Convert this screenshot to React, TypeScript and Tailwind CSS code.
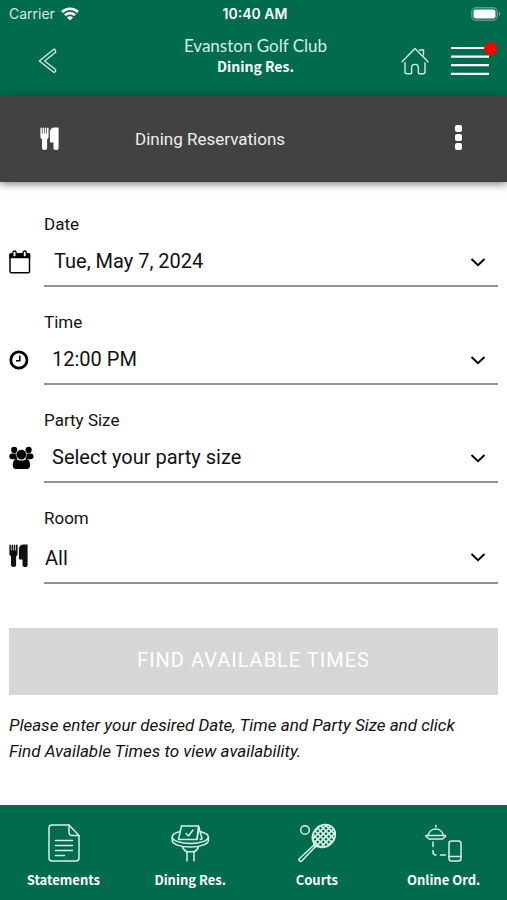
import { useState, type ReactNode } from "react";

const barFont = "font-['Noto_Sans_CJK_SC','Open_Sans',sans-serif]";

function WifiIcon() {
  return (
    <svg width="18" height="14" viewBox="0 0 18 14" fill="none" stroke="white" strokeWidth="2.6" aria-hidden="true">
      <path d="M1 5a11.3 11.3 0 0 1 16 0" />
      <path d="M3.9 8.2a7.2 7.2 0 0 1 10.2 0" />
      <path d="M9 13.6 6 10.6a4.3 4.3 0 0 1 6 0z" fill="white" stroke="none" />
    </svg>
  );
}

function BatteryIcon() {
  return (
    <svg width="30" height="14" viewBox="0 0 30 14" aria-hidden="true">
      <rect x="0.8" y="0.8" width="25.4" height="12.4" rx="4" fill="none" stroke="white" strokeOpacity="0.35" strokeWidth="1.4" />
      <rect x="2.5" y="2.5" width="22" height="9" rx="2" fill="white" />
      <path d="M28 5v4c1.6-.6 1.6-3.4 0-4z" fill="white" fillOpacity="0.5" />
    </svg>
  );
}

function BackIcon() {
  return (
    <svg width="20" height="28" viewBox="0 0 20 28" fill="none" stroke="#d5ebe2" strokeWidth="1.3" strokeLinejoin="round" aria-hidden="true">
      <path d="M16.2 2 1.3 14l14.9 11.6 1.4-1.4v-1.6L6.6 14 17.6 5.2V3.5z" />
    </svg>
  );
}

function HomeIcon() {
  return (
    <svg width="28" height="28" viewBox="0 0 28 28" fill="none" stroke="#d5ebe2" strokeWidth="1.4" strokeLinecap="round" strokeLinejoin="round" aria-hidden="true">
      <path d="M1 14.8 14 1.5l13 13.3" />
      <path d="M18.5 3h4v5" />
      <path d="M4 15.6v9.2a2 2 0 0 0 2 2h3.6a1 1 0 0 0 1-1v-5a3.4 3.4 0 0 1 6.8 0v5a1 1 0 0 0 1 1H22a2 2 0 0 0 2-2v-9.2" />
    </svg>
  );
}

function MenuIcon() {
  return (
    <svg width="38" height="30" viewBox="0 0 38 30" stroke="white" strokeWidth="2.2" aria-hidden="true">
      <path d="M0 2h38M0 10.6h38M0 19.2h38M0 27.8h38" />
    </svg>
  );
}

function CutleryIcon() {
  return (
    <svg width="20" height="24" viewBox="0 0 20 24" fill="currentColor" aria-hidden="true">
      <path d="M.4 1.5c0-1.2 1.5-1.2 1.5 0v5.1h.7V1.5c0-1.2 1.5-1.2 1.5 0v5.1h.7V1.5c0-1.2 1.5-1.2 1.5 0v5.1H7V1.5c0-1.2 1.6-1.2 1.6 0v8.1c0 1.4-.6 2.2-1.500 2.700V21c0 1.300-.8 2-2.500 2s-2.600-.7-2.600-2v-8.700C1 11.800.4 11 .4 9.600z" />
      <path d="M18.600.9v20.300c0 1.100-.8 1.800-2.200 1.800h-.7c-1.400 0-2.200-.8-2.200-2v-5.600h-2.900c-.5 0-.7-.3-.7-.8V5c0-2.400 1.900-4.400 4.500-4.400h3.700c.3 0 .5.100.5.300z" />
    </svg>
  );
}

function CalendarIcon() {
  return (
    <svg width="22" height="24" viewBox="0 0 22 24" aria-hidden="true">
      <rect x="1" y="4" width="19.5" height="18.8" rx="1.6" fill="white" stroke="black" strokeWidth="1.5" />
      <path d="M.3 8.300V4.500c0-.9.600-1.300 1.400-1.300h18.100c.9 0 1.400.5 1.400 1.300v3.800z" fill="black" />
      <rect x="3.9" y="1" width="3.2" height="6" rx="1.6" fill="white" stroke="black" strokeWidth="1.3" />
      <rect x="14.1" y="1" width="3.2" height="6" rx="1.6" fill="white" stroke="black" strokeWidth="1.3" />
    </svg>
  );
}

function ClockIcon() {
  return (
    <svg width="20" height="20" viewBox="0 0 20 20" fill="none" stroke="black" aria-hidden="true">
      <circle cx="9.9" cy="10" r="8.1" strokeWidth="2.8" />
      <path d="M10.800 5.500v5.300H7" strokeWidth="1.500" />
    </svg>
  );
}

function PartyIcon() {
  return (
    <svg width="26" height="24" viewBox="0 0 26 24" aria-hidden="true">
      <circle cx="5.200" cy="3.900" r="3.100" />
      <circle cx="19.600" cy="3.900" r="3.100" />
      <path d="M.3 10.500C.3 8.500 1.200 7.600 3 7.600h5v5.600H3.200c-1.900 0-2.900-.9-2.900-2.700zM24.500 10.500c0-2-.9-2.900-2.700-2.900h-5v5.600h4.800c1.900 0 2.900-.9 2.900-2.700z" />
      <circle cx="12.400" cy="8.600" r="5.200" stroke="white" strokeWidth=".6" />
      <path d="M7.400 13c3 2.100 7 2.100 10 0 2.600.3 3.700 3.200 3.700 6.300 0 2.300-1.100 3.700-3.300 3.700H7c-2.200 0-3.300-1.400-3.300-3.700 0-3.100 1.100-6 3.700-6.300z" />
    </svg>
  );
}

function ChevronIcon() {
  return (
    <svg width="16" height="10" viewBox="0 0 16 10" fill="none" stroke="black" strokeWidth="1.9" aria-hidden="true">
      <path d="M1.500 2 8 8.300 14.500 2" />
    </svg>
  );
}

function TabIcon({ children }: { children: ReactNode }) {
  return (
    <svg width="40" height="40" viewBox="0 0 40 40" fill="none" stroke="#d5f0e5" strokeWidth="1.5" strokeLinecap="round" strokeLinejoin="round" aria-hidden="true">
      {children}
    </svg>
  );
}

function StatementsIcon() {
  return (
    <TabIcon>
      <path d="M26 2H9a3 3 0 0 0-3 3v30a3 3 0 0 0 3 3h24a3 3 0 0 0 3-3V12.500z" />
      <path d="M26 2v7.500a3 3 0 0 0 3 3h7" />
      <path d="M12.500 17.500h17M12.500 22.500h17M12.500 27.500h17M12.500 32.500h9" />
    </TabIcon>
  );
}

function DiningIcon() {
  return (
    <TabIcon>
      <path d="M11.500 3h17l3.500 12.500a1 1 0 0 1-1.800.5" />
      <path d="M11.500 3 8.500 16.500h18.500L28.500 3" />
      <path d="M29 4.500 27 16" />
      <path d="m16 10.500 2.500 2.500 4.500-6" />
      <path d="M10 8.500c-5 1.200-7.800 3.200-7.800 5.600 0 3.600 8.200 6.400 18.100 6.400s18.100-2.800 18.100-6.400c0-2.200-3-4.200-7.500-5.400" />
      <path d="M2.200 14.100v3.400c0 3.600 8.200 6.500 18.100 6.500s18.100-2.900 18.100-6.500v-3.400" />
      <path d="M12.500 23.800c.8 2.500 2.300 4.200 4.500 5h7c2.200-.8 3.700-2.500 4.500-5" />
      <path d="M17 29v9M24 29v9" />
    </TabIcon>
  );
}

function CourtsIcon() {
  return (
    <TabIcon>
      <clipPath id="racket-head">
        <ellipse cx="26.8" cy="13" rx="12.2" ry="10.6" transform="rotate(-45 26.8 13)" />
      </clipPath>
      <circle cx="8" cy="7" r="4.3" />
      <ellipse cx="26.8" cy="13" rx="12.2" ry="10.6" transform="rotate(-45 26.8 13)" strokeWidth="1.7" />
      <g clipPath="url(#racket-head)" strokeWidth="1.6">
        <path d="M10 11l22 22M10 5.500l26 26M10 0l28 28M15.500 0l26 26M21 0l20 20M26.500 0 41 14.500" />
        <path d="M10 16 26 0M10 21.500 31.500 0M10 27 37 0M12 30.500 41 1.500M16 32l25-25M21.500 32 41 12.500" />
      </g>
      <path d="M17 19.500v2.500L2.500 35.500a1.500 1.500 0 0 0 2.500 2.300L18.500 23.500H21" />
      <path d="m16.500 22 2 2" />
    </TabIcon>
  );
}

function OnlineIcon() {
  return (
    <TabIcon>
      <path d="M4 12.500a8 8.500 0 0 1 15.500 0" />
      <path d="M11.800 3.800V2.500" />
      <path d="M2 12.500h19.500v1l-3 2.500H5l-3-2.500z" />
      <path d="M9 19v4.500M9 27.500v1.500c0 2 1 3 3 3M16.500 32h5" />
      <rect x="25" y="18" width="12" height="20" rx="2.5" />
      <path d="M25 33.500h12" />
    </TabIcon>
  );
}

type FieldProps = {
  id: string;
  label: string;
  icon: ReactNode;
  options: string[];
  selectClass: string;
};

function Field({ id, label, icon, options, selectClass }: FieldProps) {
  return (
    <div className="flex items-start">
      <div className="mt-6 flex h-[52px] w-[35px] shrink-0 items-center">{icon}</div>
      <div className="min-w-0 flex-1">
        <label htmlFor={id} className="block text-[17px] leading-6">
          {label}
        </label>
        <div className="grid items-center border-b-2 border-[#929292]">
          <select
            id={id}
            className={`col-start-1 row-start-1 w-full appearance-none bg-transparent text-[20px] leading-6 outline-none ${selectClass}`}
          >
            {options.map((option) => (
              <option key={option}>{option}</option>
            ))}
          </select>
          <span className="pointer-events-none col-start-1 row-start-1 mt-0.5 mr-3 justify-self-end">
            <ChevronIcon />
          </span>
        </div>
      </div>
    </div>
  );
}

const tabs = [
  { label: "Statements", icon: <StatementsIcon /> },
  { label: "Dining Res.", icon: <DiningIcon /> },
  { label: "Courts", icon: <CourtsIcon /> },
  { label: "Online Ord.", icon: <OnlineIcon /> },
];

export default function App() {
  const [menuOpen, setMenuOpen] = useState(false);

  return (
    <div className="flex min-h-screen flex-col bg-white font-['Roboto',sans-serif] text-[#111]">
      <header className="bg-[#006b4d] text-white">
        <div className="grid h-7 grid-cols-3 items-center pr-1.5 pl-[9px] font-['Inter',sans-serif] text-[14px] leading-5">
          <div className="flex items-center gap-1.5 text-[#d5ebe2]">
            Carrier <WifiIcon />
          </div>
          <div className="text-center font-semibold">10:40 AM</div>
          <div className="flex justify-end">
            <BatteryIcon />
          </div>
        </div>
        <div className="grid h-[68px] grid-cols-[1fr_auto_1fr] pr-[18px] pl-[22px] pb-0.5">
          <button type="button" aria-label="Back" className="ml-4 self-center justify-self-start">
            <BackIcon />
          </button>
          <div className="pt-2 text-center">
            <div className="font-['Lato',sans-serif] text-[17px] leading-5 text-[#d5f0e5]">Evanston Golf Club</div>
            <h1 className={`text-[14px] leading-5 font-bold ${barFont}`}>Dining Res.</h1>
          </div>
          <div className="flex items-center justify-end gap-[22px]">
            <button type="button" aria-label="Home">
              <HomeIcon />
            </button>
            <button
              type="button"
              aria-label="Menu"
              aria-expanded={menuOpen}
              onClick={() => setMenuOpen(!menuOpen)}
              className="relative"
            >
              <MenuIcon />
              <span className="absolute -top-1 -right-2 size-[13px] rounded-full bg-[#ff0000]" />
            </button>
          </div>
        </div>
      </header>

      <div className="flex h-[86px] items-center bg-[#424242] px-10 text-white shadow-[0_2px_8px_rgba(0,0,0,0.5)]">
        <CutleryIcon />
        <h2 className="ml-[75px] flex-1 text-[17px] leading-6 text-[#eee]">Dining Reservations</h2>
        <button type="button" aria-label="More options" className="flex w-[18px] flex-col items-center gap-0.5 pb-1">
          <span className="size-[7px] rounded-xs bg-white" />
          <span className="size-[7px] rounded-xs bg-white" />
          <span className="size-[7px] rounded-xs bg-white" />
        </button>
      </div>

      <main className="flex-1 px-[9px] pt-[30px] pb-10">
        <form onSubmit={(event) => event.preventDefault()}>
          <div className="flex flex-col gap-[22px]">
            <Field id="date" label="Date" icon={<CalendarIcon />} options={["Tue, May 7, 2024"]} selectClass="h-[49px] pl-2.5" />
            <Field id="time" label="Time" icon={<ClockIcon />} options={["12:00 PM"]} selectClass="h-[49px] pl-2" />
            <Field id="party" label="Party Size" icon={<PartyIcon />} options={["Select your party size"]} selectClass="h-[49px] pl-2" />
            <Field id="room" label="Room" icon={<CutleryIcon />} options={["All"]} selectClass="h-[52px] pt-1 pl-px" />
          </div>
          <button
            type="submit"
            disabled
            className="mt-11 h-[67px] w-full bg-[#d6d6d6] pb-1 text-[20px] leading-6 tracking-wider text-white uppercase"
          >
            Find Available Times
          </button>
        </form>
        <p className="mt-[17px] pr-6 text-[17px] leading-[26px] italic">
          Please enter your desired Date, Time and Party Size and click Find Available Times to view availability.
        </p>
      </main>

      <nav className={`flex h-[95px] bg-[#006b4d] text-white ${barFont}`}>
        {tabs.map((tab) => (
          <a key={tab.label} href="#" className="flex flex-1 flex-col items-center gap-1.5 pt-[18px]">
            {tab.icon}
            <span className="text-[13px] leading-[22px] font-bold">{tab.label}</span>
          </a>
        ))}
      </nav>
    </div>
  );
}
